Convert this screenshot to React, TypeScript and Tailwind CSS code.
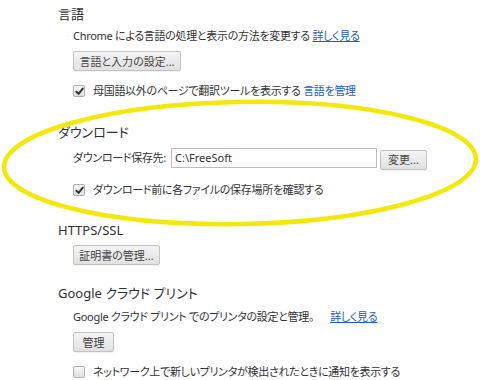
import type { ReactNode } from 'react'

const font = "font-['Noto_Sans','Noto_Sans_CJK_JP',sans-serif] [font-feature-settings:'palt']"

function Btn({ w, children }: { w: string; children: ReactNode }) {
  return (
    <button
      className={`${w} h-[20px] shrink-0 rounded-[2px] border border-[#c3c3c3] bg-gradient-to-b from-[#f4f4f4] to-[#e1e1e1] text-[11px] leading-none text-[#444] shadow-[0_1px_0_rgba(0,0,0,0.05)]`}
    >
      {children}
    </button>
  )
}

function Check({ checked, children }: { checked: boolean; children: ReactNode }) {
  return (
    <div className="flex h-[16px] items-center">
      <span className="flex h-[12px] w-[12px] shrink-0 items-center justify-center rounded-[2px] border border-[#b0b0b0] bg-gradient-to-b from-[#f8f8f8] to-[#e0e0e0]">
        {checked && (
          <svg width="9" height="9" viewBox="0 0 10 10">
            <path d="M1.6 5.2 L4 7.6 L8.6 1.8" fill="none" stroke="#333" strokeWidth="2.2" strokeLinecap="round" strokeLinejoin="round" />
          </svg>
        )}
      </span>
      <span className="ml-[8px] text-[11px] tracking-[-0.3px] text-[#333]">{children}</span>
    </div>
  )
}

function Heading({ children, className = '' }: { children: ReactNode; className?: string }) {
  return <h3 className={`h-[20px] text-[13px] leading-[20px] text-[#303030] ${className}`}>{children}</h3>
}

export default function App() {
  return (
    <div className={`relative h-[380px] w-[480px] overflow-hidden bg-white ${font}`}>
      <div className="pl-[58px] pt-[4px]">
        <Heading>言語</Heading>
        <div className="pl-[15px]">
          <p className="mt-[4px] h-[16px] text-[11px] leading-[16px] tracking-[-0.3px] text-[#333]">
            Chrome による言語の処理と表示の方法を変更する{' '}
            <a className="text-[#1a5fc5] underline">詳しく見る</a>
          </p>
          <div className="mt-[7px] flex">
            <Btn w="w-[108px]">言語と入力の設定...</Btn>
          </div>
          <div className="mt-[12px]">
            <Check checked>
              母国語以外のページで翻訳ツールを表示する <a className="text-[#1a5fc5]">言語を管理</a>
            </Check>
          </div>
        </div>

        <Heading className="mt-[23px]">ダウンロード</Heading>
        <div className="pl-[15px]">
          <div className="mt-[6px] flex h-[20px] items-center">
            <span className="w-[98px] shrink-0 text-[11px] tracking-[-0.3px] text-[#333]">ダウンロード保存先:</span>
            <div className="flex h-[20px] w-[206px] items-center border border-[#bdbdbd] bg-white pl-[3px] text-[11px] text-[#333]">
              C:\FreeSoft
            </div>
            <span className="ml-[3px]">
              <Btn w="w-[47px]">変更...</Btn>
            </span>
          </div>
          <div className="mt-[14px]">
            <Check checked>ダウンロード前に各ファイルの保存場所を確認する</Check>
          </div>
        </div>

        <Heading className="mt-[22px]">HTTPS/SSL</Heading>
        <div className="pl-[15px]">
          <div className="mt-[5px] flex">
            <Btn w="w-[87px]">証明書の管理...</Btn>
          </div>
        </div>

        <Heading className="mt-[18px] text-[13.5px]">Google クラウド プリント</Heading>
        <div className="pl-[15px]">
          <p className="mt-[6px] h-[16px] text-[11px] leading-[16px] tracking-[-0.3px] text-[#333]">
            Google クラウド プリント でのプリンタの設定と管理。
            <a className="ml-[16px] text-[#1a5fc5] underline">詳しく見る</a>
          </p>
          <div className="mt-[7px] flex">
            <Btn w="w-[41px]">管理</Btn>
          </div>
          <div className="mt-[12px]">
            <Check checked={false}>ネットワーク上で新しいプリンタが検出されたときに通知を表示する</Check>
          </div>
        </div>
      </div>

      <svg className="pointer-events-none absolute left-0 top-0" width="480" height="380" viewBox="0 0 480 380">
        <ellipse cx="240" cy="163" rx="236" ry="61" fill="none" stroke="#f3e80c" strokeWidth="4.5" transform="rotate(-1 240 163)" />
      </svg>
    </div>
  )
}
